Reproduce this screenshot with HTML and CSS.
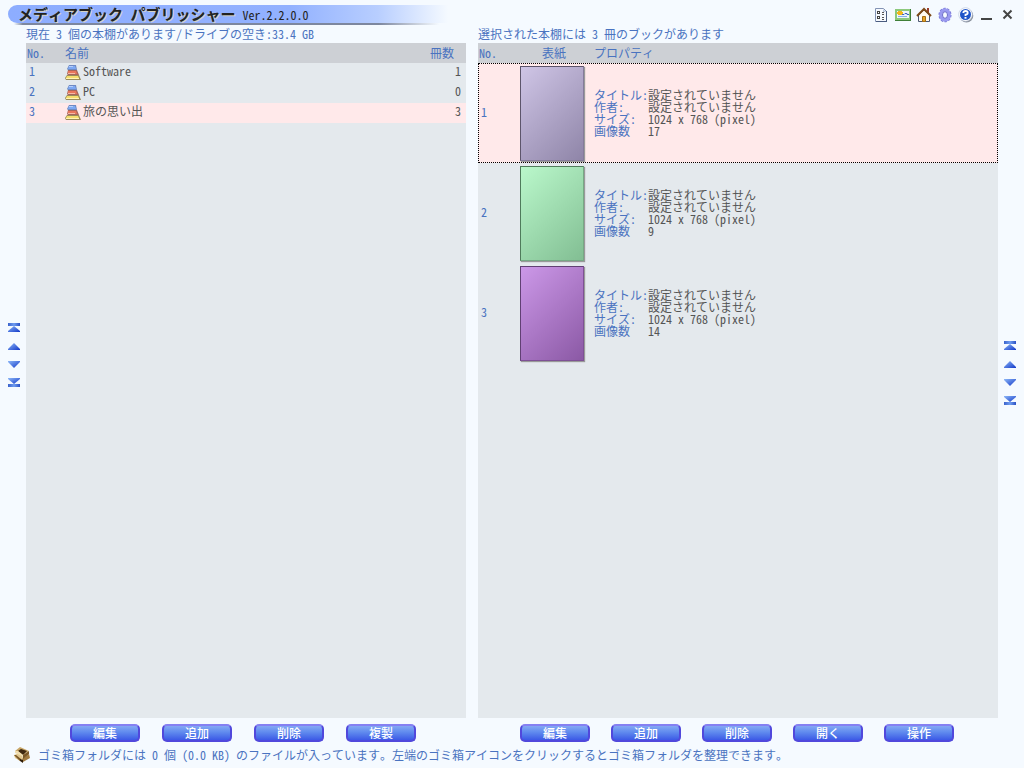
FILE: index.html
```html
<!DOCTYPE html>
<html lang="ja">
<head>
<meta charset="utf-8">
<title>メディアブック パブリッシャー</title>
<link rel="stylesheet" href="styles.css">
</head>
<body>
<svg class="defs" width="0" height="0" aria-hidden="true">
  <defs>
    <linearGradient id="blue" x1="0" y1="0" x2="1" y2="1"><stop offset="0" stop-color="#8db8f8"/><stop offset="1" stop-color="#1238c8"/></linearGradient>
    <linearGradient id="bar" x1="0" y1="0" x2="1" y2="0"><stop offset="0" stop-color="#3a62cc"/><stop offset=".5" stop-color="#6f9df0"/><stop offset="1" stop-color="#2a50c4"/></linearGradient>
    <symbol id="first" viewBox="0 0 12 10"><path fill="url(#bar)" d="M0 0h12v3H0z"/><path fill="url(#blue)" d="M6 3l6 5v1H0V8z"/></symbol>
    <symbol id="up" viewBox="0 0 12 10"><path fill="url(#blue)" d="M6 2l6 6v1H0V8z"/></symbol>
    <symbol id="down" viewBox="0 0 12 10"><path fill="url(#blue)" d="M0 2h12v1L6 9 0 3z"/></symbol>
    <symbol id="last" viewBox="0 0 12 10"><path fill="url(#blue)" d="M0 1h12v1L6 7 0 2z"/><path fill="url(#bar)" d="M0 7h12v3H0z"/></symbol>
    <symbol id="books" viewBox="0 0 16 16">
      <path fill="#9a8c5a" d="M0 13l2-3h12l2 5H1z"/><path fill="#f6df6e" d="M2 11h11l1 2H1z"/><path fill="#fff3b4" d="M1 13h13v1H1z"/>
      <path fill="#a8665c" d="M2 9l1-4h9l2 5H3z"/><path fill="#e8765c" d="M3 6h8l1 3H3z"/><path fill="#f5b9a6" d="M3 8h7v1H3z"/>
      <path fill="#6f8ac2" d="M2 4l2-4h7l1 5H3z"/><path fill="#7ea9f4" d="M4 1h6l1 3H3z"/><path fill="#b5cefa" d="M4 1h4v1H4z"/>
    </symbol>
  </defs>
</svg>
<div class="window">
  <header class="titlebar">
    <h1 class="brand"><span class="name">メディアブック<span class="hw"> </span>パブリッシャー</span><span class="hw version">Ver.2.2.0.0</span></h1>
    <div class="tools">
      <button class="tool" aria-label="一覧"><svg viewBox="0 0 16 16"><path fill="#f6f9fe" stroke="#8393b4" d="M1.500 1.500h8l3 3v10h-11z"/><path fill="#4a5c80" d="M12 4h1v11H2v-1h10z"/><path fill="#b8c6de" d="M9 2l3 3H9z"/><path fill="#444" d="M3 4h3v3H3zM3 9h3v3H3z"/><path fill="#fff" d="M4 5h1v1H4zM4 10h1v1H4z"/><path fill="#555" d="M8 5h2v1H8zM8 7h2v1H8zM8 10h2v1H8zM8 12h2v1H8z"/></svg></button>
      <button class="tool" aria-label="画像"><svg viewBox="0 0 16 16"><path fill="#8cc97c" d="M0 2h16v12H0z"/><path fill="#3f7f38" d="M15 2h1v12H0v-1h15z"/><path fill="#eef6fc" d="M2 4h12v7H2z"/><path fill="#f4b51e" d="M3 4h4v1h1v2H7v1H3V7H2V5h1z"/><path fill="none" stroke="#3c66c0" d="M7 7.500h2l1-1h2v1h2"/><path fill="#88b0e8" d="M3 9h9v1H3z"/></svg></button>
      <button class="tool" aria-label="ホーム"><svg viewBox="0 0 16 16"><path fill="#9c3f2c" d="M11 1h2v5h-2z"/><path fill="#fffaf0" stroke="#4c5873" d="M2.500 8v6.500h11V8L8 3z"/><path fill="none" stroke="#7d4a18" stroke-width="2" d="M1 9l7-7 7 7"/><path fill="#e5a326" stroke="#a56d12" d="M6.500 9.500h3v5h-3z"/></svg></button>
      <button class="tool" aria-label="設定"><svg viewBox="0 0 16 16"><ellipse cx="8" cy="8" rx="5.500" ry="6.300" fill="none" stroke="#6e6ed0" stroke-width="2" stroke-dasharray="2.200 1.450"/><ellipse cx="8" cy="8" rx="4.200" ry="5" fill="none" stroke="#9a9af0" stroke-width="3.400"/><ellipse cx="8" cy="8" rx="2.500" ry="3.300" fill="#f5faff" stroke="#6a6ac8"/></svg></button>
      <button class="tool" aria-label="ヘルプ"><svg viewBox="0 0 16 16"><circle cx="8.500" cy="8.800" r="6.800" fill="#8d949e"/><circle cx="7.500" cy="7.500" r="6.800" fill="#fff" stroke="#b4c0d6" stroke-width=".6"/><circle cx="7.500" cy="7.500" r="5.500" fill="#1f55c9"/><path fill="none" stroke="#fff" stroke-width="1.800" d="M5.300 6q0-2 2.200-2t2.200 1.800T7.500 7.700V9"/><path fill="#fff" d="M6.500 10h2v1.700h-2z"/></svg></button>
      <button class="tool" aria-label="最小化"><svg viewBox="0 0 16 16"><path fill="#444" d="M2 11h11v2H2z"/></svg></button>
      <button class="tool" aria-label="閉じる"><svg viewBox="0 0 16 16"><path fill="none" stroke="#444" stroke-width="2" d="M3.500 3.500l8 8M11.500 3.500l-8 8"/></svg></button>
    </div>
  </header>
  <main class="content">
    <nav class="scroller left" aria-label="本棚のスクロール">
      <button class="arrow" aria-label="先頭"><svg><use href="#first"/></svg></button>
      <button class="arrow" aria-label="上"><svg><use href="#up"/></svg></button>
      <button class="arrow" aria-label="下"><svg><use href="#down"/></svg></button>
      <button class="arrow" aria-label="末尾"><svg><use href="#last"/></svg></button>
    </nav>
    <section class="pane">
      <p class="summary">現在<span class="hw"> 3 </span>個の本棚があります<span class="hw">/</span>ドライブの空き<span class="hw">:33.4 GB</span></p>
      <div class="list">
        <table class="grid shelves">
          <thead><tr><th class="c-no hw">No.</th><th>名前</th><th class="c-count">冊数</th></tr></thead>
          <tbody>
            <tr><td class="c-no hw">1</td><td><span class="shelf"><svg><use href="#books"/></svg><span class="hw">Software</span></span></td><td class="c-count hw">1</td></tr>
            <tr><td class="c-no hw">2</td><td><span class="shelf"><svg><use href="#books"/></svg><span class="hw">PC</span></span></td><td class="c-count hw">0</td></tr>
            <tr class="selected"><td class="c-no hw">3</td><td><span class="shelf"><svg><use href="#books"/></svg><span>旅の思い出</span></span></td><td class="c-count hw">3</td></tr>
          </tbody>
        </table>
      </div>
      <div class="actions shelf-actions">
        <button class="btn">編集</button><button class="btn">追加</button><button class="btn">削除</button><button class="btn">複製</button>
      </div>
    </section>
    <section class="pane">
      <p class="summary">選択された本棚には<span class="hw"> 3 </span>冊のブックがあります</p>
      <div class="list">
        <table class="grid books">
          <thead><tr><th class="c-no hw">No.</th><th class="c-cover">表紙</th><th class="c-prop">プロパティ</th></tr></thead>
          <tbody>
            <tr class="selected current"><td class="c-no hw">1</td><td class="c-cover"><div class="cover lavender"></div></td><td class="c-prop">
              <dl class="props"><dt>タイトル<span class="hw">:</span></dt><dd>設定されていません</dd><dt>作者<span class="hw">:</span></dt><dd>設定されていません</dd><dt>サイズ<span class="hw">:</span></dt><dd class="hw">1024 x 768 (pixel)</dd><dt>画像数</dt><dd class="hw">17</dd></dl></td></tr>
            <tr><td class="c-no hw">2</td><td class="c-cover"><div class="cover green"></div></td><td class="c-prop">
              <dl class="props"><dt>タイトル<span class="hw">:</span></dt><dd>設定されていません</dd><dt>作者<span class="hw">:</span></dt><dd>設定されていません</dd><dt>サイズ<span class="hw">:</span></dt><dd class="hw">1024 x 768 (pixel)</dd><dt>画像数</dt><dd class="hw">9</dd></dl></td></tr>
            <tr><td class="c-no hw">3</td><td class="c-cover"><div class="cover purple"></div></td><td class="c-prop">
              <dl class="props"><dt>タイトル<span class="hw">:</span></dt><dd>設定されていません</dd><dt>作者<span class="hw">:</span></dt><dd>設定されていません</dd><dt>サイズ<span class="hw">:</span></dt><dd class="hw">1024 x 768 (pixel)</dd><dt>画像数</dt><dd class="hw">14</dd></dl></td></tr>
          </tbody>
        </table>
      </div>
      <div class="actions book-actions">
        <button class="btn">編集</button><button class="btn">追加</button><button class="btn">削除</button><button class="btn">開く</button><button class="btn">操作</button>
      </div>
    </section>
    <nav class="scroller right" aria-label="ブックのスクロール">
      <button class="arrow" aria-label="先頭"><svg><use href="#first"/></svg></button>
      <button class="arrow" aria-label="上"><svg><use href="#up"/></svg></button>
      <button class="arrow" aria-label="下"><svg><use href="#down"/></svg></button>
      <button class="arrow" aria-label="末尾"><svg><use href="#last"/></svg></button>
    </nav>
  </main>
  <footer class="status">
    <button class="trash" aria-label="ゴミ箱"><svg viewBox="0 0 16 16"><path fill="#e0c68e" d="M0 8l8-3 1 7-3 2-5-3z"/><path fill="#a07a40" d="M8 12l7-5 1 4-7 4z"/><path fill="#c9a767" d="M1 4l5-4 9 4-6 4z"/><path fill="#3e2810" d="M4 4l3-2 6 2-4 4z"/><path fill="#f0deb0" d="M1 4l3 0 5 4-1 1-7-3z"/><path fill="#7a5726" d="M9 8l6-4v3l-6 5zM0 8h2l5 4-1 2z"/><path fill="#2c1b08" d="M6 12l3 1v3l-3-2z"/></svg></button>
    <p>ゴミ箱フォルダには<span class="hw"> 0 </span>個<span class="hw"> (0.0 KB) </span>のファイルが入っています。左端のゴミ箱アイコンをクリックするとゴミ箱フォルダを整理できます。</p>
  </footer>
</div>
</body>
</html>
```
FILE: styles.css
```css
* { box-sizing: border-box; }
body { margin: 0; background: #f5faff; color: #555; font: 12px/12px "Noto Sans CJK JP", sans-serif; font-kerning: none; }
p, h1, dl, dd { margin: 0; }
button { margin: 0; padding: 0; border: 0; background: none; font: inherit; cursor: pointer; }
svg { display: block; }
.defs { position: absolute; }
.hw { font-feature-settings: "hwid"; white-space: pre; }
.window { display: flex; flex-direction: column; min-height: 100vh; }

.titlebar { display: flex; justify-content: space-between; padding: 5px 8px 0; height: 28px; }
.brand { position: relative; flex: 0 1 440px; height: 18px; padding-left: 10px; display: flex; align-items: center; gap: 7px; border-radius: 9px 0 0 9px; background: linear-gradient(90deg, #8dadff 0, #92b1ff 64%, #b8ceff 84%, #f5faff 100%); color: #222; font-size: 15px; line-height: 18px; white-space: nowrap; }
/* soft edge under the title bar, fading out to the right */
.brand::after { content: ""; position: absolute; top: 100%; left: 6px; right: 0; height: 2px; background: linear-gradient(90deg, transparent, #7d879f 2%, #7d879f 84%, transparent 98%); }
.name { text-shadow: 1px 1px 0 #d6d3c4; }
.version { font-size: 12px; font-weight: 400; padding-top: 2px; }
.tools { display: flex; gap: 5px; padding-top: 2px; }
.tool, .tool svg { width: 16px; height: 16px; }

.content { flex: 1; display: grid; grid-template-columns: 26px minmax(0, 440fr) 12px minmax(0, 520fr) 26px; }
.pane { display: flex; flex-direction: column; grid-column: 2; grid-row: 1; }
.pane + .pane { grid-column: 4; }
.summary { height: 15px; color: #4a73c0; line-height: 12px; }
.list { flex: 1; background: #e4e9ed; }
.grid { width: 100%; border-collapse: collapse; table-layout: fixed; }
.grid th { height: 20px; padding: 0; background: #cdd0d5; color: #4a73c0; font-weight: 400; text-align: left; }
.grid td { height: 20px; padding: 0; }
.grid .c-no { width: 39px; padding-left: 1px; color: #4a73c0; }
.grid td.c-no { padding-left: 3px; }
.grid .c-count { width: 60px; text-align: right; padding-right: 5px; }
.grid th.c-count { padding-right: 12px; }
.shelves td { padding-top: 2px; vertical-align: top; }
.selected { background: #ffe9ea; }
.shelf { display: flex; align-items: flex-start; gap: 2px; }
.shelf svg { width: 16px; height: 16px; }
.books td { height: 100px; }
.books .c-cover { width: 76px; text-align: center; padding-right: 4px; }
.books .c-no { width: 40px; }
.books td.c-no { padding-bottom: 2px; }
.books td.c-cover { padding: 0 0 0 2px; }
.current { outline: 1px dotted #000; outline-offset: -1px; }
.cover { width: 64px; height: 95px; border: 1px solid; box-shadow: 1px 1px 1px #999; }
.lavender { background: linear-gradient(135deg, #cfc5e6, #8f85a8); border-color: #5d556b #857b9a #857b9a #5d556b; }
.green { background: linear-gradient(135deg, #baf8cb, #82be93); border-color: #4f7b5b #76a985 #76a985 #4f7b5b; }
.purple { background: linear-gradient(135deg, #cc98e8, #8b59a5); border-color: #614074 #7e5195 #7e5195 #614074; }
.props { display: grid; grid-template-columns: 54px 1fr; line-height: 12px; white-space: nowrap; }
.props dt { color: #4a73c0; }

.actions { display: flex; height: 24px; padding-top: 6px; }
.shelf-actions { padding-left: 44px; gap: 22px; }
.book-actions { padding-left: 42px; gap: 21px; }
.btn { width: 70px; height: 18px; border: 2px solid #5148dc; border-top-color: #8580f2; border-radius: 5px; background: linear-gradient(#84a8f4, #5f8aee 45%, #3c59e6); color: #fff; font-weight: 500; line-height: 14px; }

.scroller { display: flex; flex-direction: column; gap: 8px; grid-row: 1; }
.left { grid-column: 1; padding: 295px 0 0 8px; }
.right { grid-column: 5; padding: 313px 0 0 6px; }
.arrow, .arrow svg { width: 12px; height: 10px; }

.status { display: flex; align-items: center; gap: 8px; height: 26px; padding: 0 14px; color: #4a73c0; white-space: nowrap; }
.trash, .trash svg { width: 16px; height: 16px; }
```
